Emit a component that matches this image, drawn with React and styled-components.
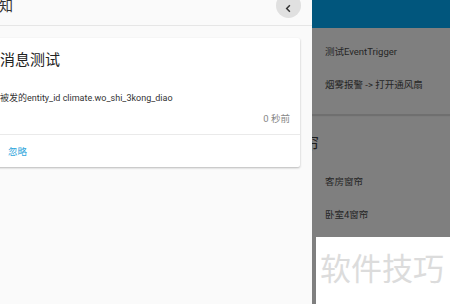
import React from "react";
import styled, { createGlobalStyle } from "styled-components";

const Global = createGlobalStyle`
  html, body { margin: 0; padding: 0; }
  body {
    width: 450px; height: 304px; overflow: hidden;
    font-family: Roboto, "Noto Sans CJK SC", sans-serif;
    background: #7f7f7f;
  }
`;

const Page = styled.div`
  position: relative;
  display: flex;
  width: 450px;
  height: 304px;
  overflow: hidden;
`;

const Drawer = styled.div`
  position: relative;
  z-index: 1;
  width: 312px;
  flex: none;
  background: #fafafa;
  overflow: hidden;
  display: flex;
  flex-direction: column;
`;

const Header = styled.div`
  height: 26px;
  flex: none;
  box-sizing: border-box;
  border-bottom: 1px solid #e6e6e6;
  display: flex;
  align-items: flex-start;
  justify-content: space-between;
  padding-right: 11px;
  margin-left: -15px;
`;

const Title = styled.div`
  font-size: 14px;
  line-height: 14px;
  color: #333;
  margin-top: -1px;
`;

const BackButton = styled.div`
  width: 25px;
  height: 25px;
  border-radius: 50%;
  background: #e0e0e0;
  margin-top: -7px;
  display: flex;
  align-items: center;
  justify-content: center;
`;

const Content = styled.div`
  padding: 12px 12px 0 0;
  margin-left: -16px;
`;

const Card = styled.div`
  background: #fff;
  border-radius: 2px;
  box-shadow: 0 1px 2px rgba(0,0,0,0.2), 0 1px 3px rgba(0,0,0,0.08);
`;

const CardBody = styled.div`
  padding: 12px 10px 9px 16px;
`;

const CardTitle = styled.div`
  font-size: 15px;
  line-height: 20px;
  color: #222;
  margin-bottom: 22px;
`;

const Message = styled.div`
  font-size: 9px;
  line-height: 12px;
  color: #333;
`;

const Time = styled.div`
  font-size: 9.5px;
  line-height: 12px;
  color: #888;
  text-align: right;
  margin-top: 9px;
`;

const Actions = styled.div`
  border-top: 1px solid #eaeaea;
  padding: 10px 0 9px 24px;
`;

const ActionButton = styled.div`
  font-size: 9.5px;
  line-height: 13px;
  color: #2fa6dc;
`;

const Side = styled.div`
  flex: 1;
  background: #7f7f7f;
  display: flex;
  flex-direction: column;
`;

const TopBar = styled.div`
  height: 28px;
  flex: none;
  background: #01567d;
`;

const Section = styled.div`
  display: flex;
  flex-direction: column;
  padding: ${p => (p.divided ? "8px 0 12px 13px" : "8px 0 6px 13px")};
  border-bottom: ${p => (p.divided ? "1px solid #6f6f6f" : "none")};
  box-shadow: ${p => (p.divided ? "0 1px 1px rgba(0,0,0,0.12)" : "none")};
`;

const SectionTitle = styled.div`
  font-size: 16px;
  line-height: 20px;
  color: #1e1e1e;
  margin-left: -38px;
  margin-top: 11px;
  margin-bottom: 12px;
  white-space: nowrap;
`;

const Item = styled.div`
  font-size: 9.5px;
  line-height: 13px;
  color: #262626;
  padding: 9px 0 11px;
`;

const Watermark = styled.div`
  position: absolute;
  left: 316px;
  top: 237px;
  right: 0;
  bottom: 0;
  background: #fff;
  display: flex;
  align-items: flex-start;
  padding: 12px 0 0 4px;
  font-family: "Noto Sans CJK SC", sans-serif;
  font-size: 31px;
  line-height: 36px;
  color: #dcdcdc;
  white-space: nowrap;
  z-index: 2;
`;

export default function App() {
  return (
    <>
      <Global />
      <Page>
        <Drawer>
          <Header>
            <Title>通知</Title>
            <BackButton>
              <svg width="11" height="11" viewBox="0 0 24 24" style={{ marginTop: 6 }}>
                <path d="M15 5 8 12l7 7" fill="none" stroke="#333" strokeWidth="3.2" />
              </svg>
            </BackButton>
          </Header>
          <Content>
            <Card>
              <CardBody>
                <CardTitle>消息测试</CardTitle>
                <Message>被发的entity_id climate.wo_shi_3kong_diao</Message>
                <Time>0 秒前</Time>
              </CardBody>
              <Actions>
                <ActionButton>忽略</ActionButton>
              </Actions>
            </Card>
          </Content>
        </Drawer>
        <Side>
          <TopBar />
          <Section divided>
            <Item>测试EventTrigger</Item>
            <Item>烟雾报警 -&gt; 打开通风扇</Item>
          </Section>
          <Section>
            <SectionTitle>窗帘</SectionTitle>
            <Item>客房窗帘</Item>
            <Item>卧室4窗帘</Item>
          </Section>
        </Side>
        <Watermark>软件技巧</Watermark>
      </Page>
    </>
  );
}
